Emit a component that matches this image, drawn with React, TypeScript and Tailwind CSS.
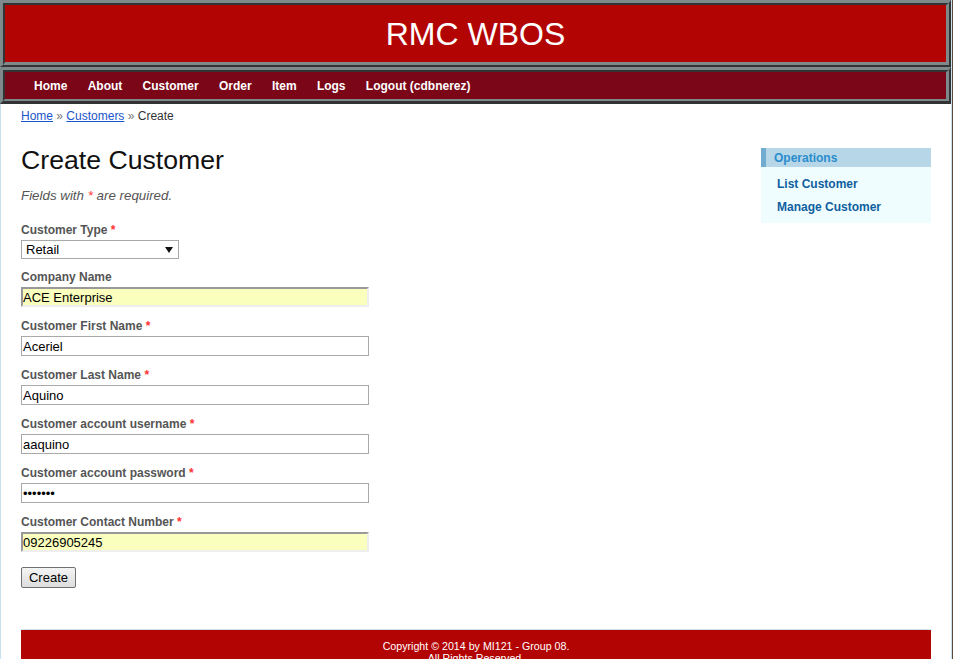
import React from "react";

type Field = {
  label: string;
  req: boolean;
  value: string;
  auto?: boolean;
  type?: string;
};

const fields: Field[] = [
  { label: "Company Name", req: false, value: "ACE Enterprise", auto: true },
  { label: "Customer First Name", req: true, value: "Aceriel" },
  { label: "Customer Last Name", req: true, value: "Aquino" },
  { label: "Customer account username", req: true, value: "aaquino" },
  { label: "Customer account password", req: true, value: "aaquino", type: "password" },
  { label: "Customer Contact Number", req: true, value: "09226905245", auto: true },
];

const navItems = ["Home", "About", "Customer", "Order", "Item", "Logs", "Logout (cdbnerez)"];

function Label({ text, req }: { text: string; req: boolean }) {
  return (
    <div className="text-[12px] leading-[17px] font-bold text-[#555]">
      {text}
      {req && <span className="text-[#f33] font-bold"> *</span>}
    </div>
  );
}

export default function App() {
  return (
    <div className="min-h-screen w-full bg-[#5a4a3b] font-['Liberation_Sans',Arial,Helvetica,sans-serif]">
      <div className="w-[952px] min-h-screen bg-white border-r border-[#c9e0ed] flex flex-col">
        {/* Header */}
        <div className="w-[951px] border-t-[3px] border-l-[3px] border-t-[#7d898b] border-l-[#7d898b] border-b-[2px] border-r-[2px] border-b-[#333] border-r-[#333]">
          <div className="h-[57px] bg-[#b30404] border-t-[2px] border-l-[2px] border-t-[#333] border-l-[#333] border-b-[3px] border-r-[3px] border-b-[#7d898b] border-r-[#7d898b] box-content flex items-center justify-center">
            <div className="text-white text-[32px] leading-none pt-[1px]">RMC WBOS</div>
          </div>
        </div>
        {/* Nav */}
        <div className="w-[951px] border-t-[3px] border-l-[3px] border-t-[#7d898b] border-l-[#7d898b] border-b-[3px] border-r-[2px] border-b-[#333] border-r-[#333]">
          <div className="h-[26px] bg-[#7a0618] border-t-[2px] border-l-[2px] border-t-[#333] border-l-[#333] border-b-[2px] border-r-[3px] border-b-[#7d898b] border-r-[#7d898b] box-content flex items-center pl-[29px] pt-[1px] gap-[20.3px]">
            {navItems.map((n) => (
              <span key={n} className="text-white text-[12px] font-bold leading-none">
                {n}
              </span>
            ))}
          </div>
        </div>
        {/* Content */}
        <div className="flex-1 border-l border-[#c9e0ed] px-[20px]">
          <div className="pt-[5px] pb-[3px] text-[12px] leading-[15px] text-[#333]">
            <a className="text-[#1a55c9] underline" href="#">Home</a>
            <span className="text-[#777]"> » </span>
            <a className="text-[#1a55c9] underline" href="#">Customers</a>
            <span className="text-[#777]"> » </span>
            <span>Create</span>
          </div>
          <div className="flex">
            <div className="flex-1">
              <h1 className="mt-[18px] text-[26.67px] leading-[30px] text-[#111] font-normal">Create Customer</h1>
              <p className="mt-[13px] text-[13.33px] leading-[16px] italic text-[#555]">
                Fields with <span className="text-[#f33]">*</span> are required.
              </p>
              <div className="mt-[18px]">
                <Label text="Customer Type" req={true} />
                <div className="mt-[1px] w-[158px] h-[19px] border border-[#a9a9a9] bg-white flex items-center justify-between pl-[4px] pr-[5px]">
                  <span className="text-[13px] text-black leading-none">Retail</span>
                  <svg width="8" height="6" viewBox="0 0 8 6">
                    <path d="M0 0 H8 L4 6 Z" fill="#111" />
                  </svg>
                </div>
              </div>
              {fields.map((f, i) => (
                <div key={f.label} className={i === 0 ? "mt-[10px]" : "mt-[11px]"}>
                  <Label text={f.label} req={f.req} />
                  <input
                    type={f.type || "text"}
                    defaultValue={f.value}
                    readOnly
                    className={
                      f.auto
                        ? "mt-[1px] block w-[348px] h-[20px] bg-[#faffbd] border-t-2 border-l-2 border-b-2 border-r-2 border-t-[#999] border-l-[#999] border-b-[#eee] border-r-[#eee] px-0 text-[13px] text-black outline-none"
                        : "mt-[1px] block w-[348px] h-[20px] bg-white border border-[#a9a9a9] px-[1px] text-[13px] text-black outline-none"
                    }
                  />
                </div>
              ))}
              <button className="mt-[15px] h-[21px] w-[55px] border border-[#707070] rounded-[2px] bg-gradient-to-b from-[#f4f4f4] to-[#dddddd] text-[13px] text-black leading-none">
                Create
              </button>
            </div>
            <div className="w-[170px] mt-[21px] self-start">
              <div className="h-[19px] bg-[#b7d6e7] border-l-[5px] border-[#6facd0] flex items-center pl-[8px]">
                <span className="text-[12px] font-bold text-[#298dcd]">Operations</span>
              </div>
              <div className="bg-[#effdff] pt-[6px] pb-[4px] pl-[8px]">
                <div className="py-[4px] pl-[8px] text-[12px] leading-[15px] font-bold text-[#0f5fa0]">List Customer</div>
                <div className="py-[4px] pl-[8px] text-[12px] leading-[15px] font-bold text-[#0f5fa0]">Manage Customer</div>
              </div>
            </div>
          </div>
          <div className="mt-[40px] border-t border-[#c9e0ed] bg-[#b30404] pt-[10px] pb-[10px] text-center text-white text-[10.67px] leading-[12px]">
            <div>Copyright © 2014 by MI121 - Group 08.</div>
            <div>All Rights Reserved.</div>
          </div>
        </div>
      </div>
    </div>
  );
}
